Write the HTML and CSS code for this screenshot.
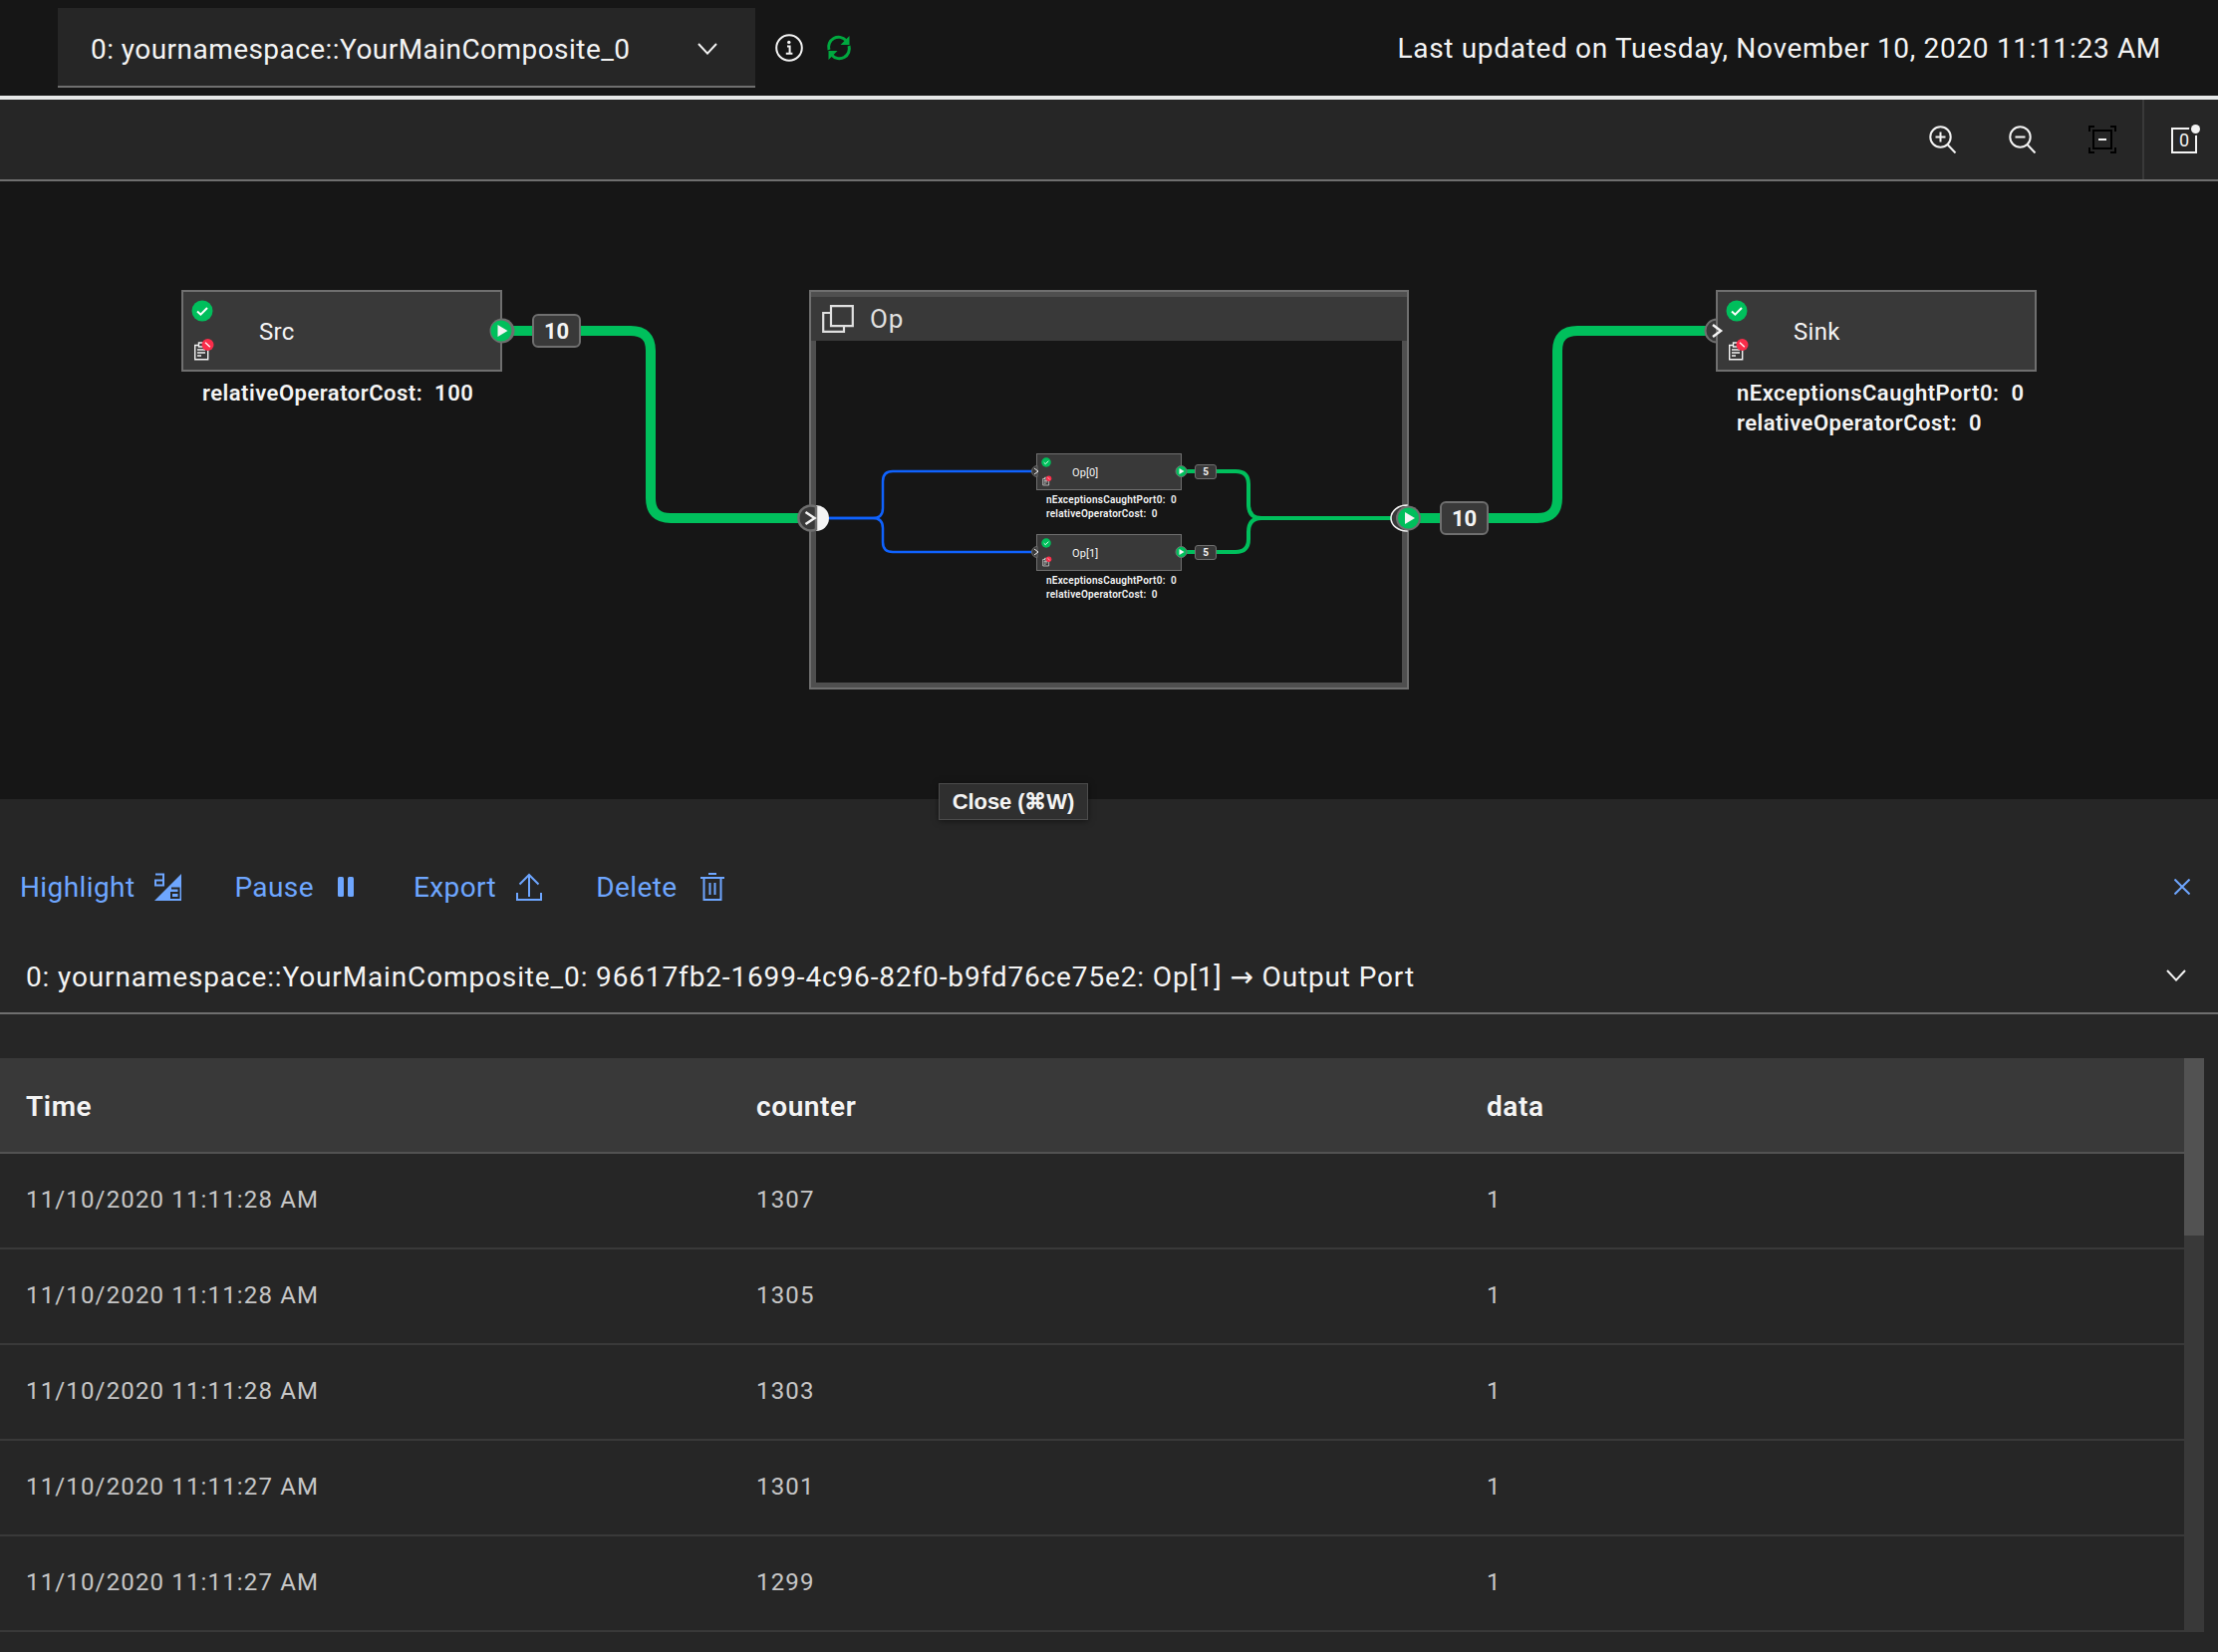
FILE: index.html
```html
<!DOCTYPE html>
<html>
<head>
  <title>Streams Graph</title>
  <link rel="stylesheet" href="styles.css">
</head>
<body>
  <svg class="icon-defs" width="0" height="0">
    <defs>
      <symbol id="i-check" viewBox="0 0 22 22">
        <circle cx="11" cy="11" r="10.5" fill="#00bf5c"/>
        <path d="M6 11.5l3.4 3.2L16 8" fill="none" stroke="#fff" stroke-width="2"/>
      </symbol>
      <symbol id="i-log" viewBox="0 0 24 24">
        <path d="M3.7 7.5h13v14.3h-13z" fill="#393939" stroke="#f4f4f4" stroke-width="1.4"/>
        <path d="M7.5 5h5.5v4H7.5z" fill="#393939" stroke="#f4f4f4" stroke-width="1.4"/>
        <path d="M6 12h8M6 15h8M6 18h4" stroke="#f4f4f4" stroke-width="1.3"/>
        <circle cx="16.500" cy="7" r="6" fill="#fa2d4a"/>
        <path d="M14 4.800l4.800 4.400" stroke="#fff" stroke-width="1.3"/>
      </symbol>
      <symbol id="i-chevron" viewBox="0 0 20 12">
        <path d="M1 1l9 9.6L19 1" fill="none" stroke="currentColor" stroke-width="2"/>
      </symbol>
    </defs>
  </svg>

  <header class="topbar">
    <div class="job-select">
      <span>0: yournamespace::YourMainComposite_0</span>
      <svg class="chevron"><use href="#i-chevron"/></svg>
    </div>
    <svg class="info-icon" viewBox="0 0 28 28">
      <circle cx="14" cy="14" r="12.8" fill="none" stroke="#f4f4f4" stroke-width="2"/>
      <path d="M12 12.5h2.6v7M10.8 19.8h6.6" fill="none" stroke="#f4f4f4" stroke-width="2"/>
      <circle cx="13.8" cy="8.4" r="1.7" fill="#f4f4f4"/>
    </svg>
    <svg class="refresh-icon" viewBox="0 0 26 26">
      <path d="M3 15A10 10 0 0 1 20 5.5" fill="none" stroke="#00a83f" stroke-width="3"/>
      <path d="M23 11A10 10 0 0 1 6 20.5" fill="none" stroke="#00a83f" stroke-width="3"/>
      <path d="M23.500 1v9h-9zM2.500 25v-9h9z" fill="#00a83f"/>
    </svg>
    <div class="updated">Last updated on Tuesday, November 10, 2020 11:11:23 AM</div>
  </header>

  <div class="toolbar">
    <svg class="tool-icon" viewBox="0 0 28 28">
      <circle cx="11.500" cy="11.500" r="10.200" fill="none" stroke="#f4f4f4" stroke-width="2"/>
      <path d="M11.500 6.500v10M6.500 11.500h10M18.500 19l8 8.500" fill="none" stroke="#f4f4f4" stroke-width="2"/>
    </svg>
    <svg class="tool-icon" viewBox="0 0 28 28">
      <circle cx="11.500" cy="11.500" r="10.200" fill="none" stroke="#f4f4f4" stroke-width="2"/>
      <path d="M6.500 11.500h10M18.500 19l8 8.500" fill="none" stroke="#f4f4f4" stroke-width="2"/>
    </svg>
    <svg class="tool-icon" viewBox="0 0 28 28">
      <path d="M1 6V1h5M22 1h5v5M1 22v5h5M27 22v5h-5" fill="none" stroke="#000" stroke-width="2"/>
      <path d="M5 5h18v18H5z" fill="none" stroke="#000" stroke-width="2"/>
      <path d="M10 14h8" stroke="#f4f4f4" stroke-width="2"/>
    </svg>
    <div class="tool-divider">
      <div class="notif">
        <span>0</span>
      </div>
    </div>
  </div>

  <main class="canvas">
    <div class="composite">
      <div class="composite-title">
        <svg class="composite-icon" viewBox="0 0 32 28">
          <path d="M9 1.200h21.800v20H9z" fill="none" stroke="#e0e0e0" stroke-width="2.200"/>
          <path d="M9 8H1.200v18.800H22V21" fill="none" stroke="#e0e0e0" stroke-width="2.200"/>
        </svg>
        <span>Op</span>
      </div>
    </div>

    <div class="op-node op-src">
      <div class="op-box">
        <div class="op-icons">
          <svg class="st-icon"><use href="#i-check"/></svg>
          <svg class="log-icon"><use href="#i-log"/></svg>
        </div>
        <span class="op-name">Src</span>
      </div>
      <div class="op-metrics">
        <div>relativeOperatorCost:  100</div>
      </div>
    </div>

    <div class="op-node op-sink">
      <div class="op-box">
        <div class="op-icons">
          <svg class="st-icon"><use href="#i-check"/></svg>
          <svg class="log-icon"><use href="#i-log"/></svg>
        </div>
        <span class="op-name">Sink</span>
      </div>
      <div class="op-metrics">
        <div>nExceptionsCaughtPort0:  0</div>
        <div>relativeOperatorCost:  0</div>
      </div>
    </div>

    <div class="op-node small op-par0">
      <div class="op-box">
        <div class="op-icons">
          <svg class="st-icon"><use href="#i-check"/></svg>
          <svg class="log-icon"><use href="#i-log"/></svg>
        </div>
        <span class="op-name">Op[0]</span>
      </div>
      <div class="op-metrics">
        <div>nExceptionsCaughtPort0:  0</div>
        <div>relativeOperatorCost:  0</div>
      </div>
    </div>

    <div class="op-node small op-par1">
      <div class="op-box">
        <div class="op-icons">
          <svg class="st-icon"><use href="#i-check"/></svg>
          <svg class="log-icon"><use href="#i-log"/></svg>
        </div>
        <span class="op-name">Op[1]</span>
      </div>
      <div class="op-metrics">
        <div>nExceptionsCaughtPort0:  0</div>
        <div>relativeOperatorCost:  0</div>
      </div>
    </div>

    <!-- wires and ports, viewBox uses page coordinates -->
    <svg class="wires" viewBox="0 182 2226 620">
      <path class="wire-blue" d="M832 520H876Q886 520 886 510V483Q886 473 896 473H1035"/>
      <path class="wire-blue" d="M832 520H876Q886 520 886 530V544Q886 554 896 554H1035"/>
      <path class="wire-thin" d="M1186 473H1240Q1253 473 1253 486V506Q1253 520 1266 520H1400"/>
      <path class="wire-thin" d="M1186 554H1240Q1253 554 1253 541V534Q1253 520 1266 520"/>
      <path class="wire" d="M503 332H633Q653 332 653 352V500Q653 520 673 520H805"/>
      <path class="wire" d="M1412 520H1543Q1563 520 1563 500V352Q1563 332 1583 332H1715"/>

      <!-- composite input -->
      <path d="M819 507A13 13 0 0 1 819 533z" fill="#f4f4f4"/>
      <path d="M819 508.600A12.500 12.500 0 1 0 819 531.400z" fill="#393939" stroke="#6f6f6f" stroke-width="2.500"/>
      <path class="chev" d="M808.500 514l9 6-9 6"/>

      <!-- composite output -->
      <path d="M1412 507A16 13 0 0 0 1412 533z" fill="#393939" stroke="#f4f4f4" stroke-width="1.500"/>
      <circle cx="1413.500" cy="520" r="12.500" fill="#6f6f6f"/>
      <circle cx="1413.500" cy="520" r="10.500" fill="#00bf5c"/>
      <path d="M1410 514l10 6-10 6z" fill="#f4f4f4"/>

      <!-- src out -->
      <circle cx="504" cy="332" r="12.500" fill="#6f6f6f"/>
      <circle cx="503" cy="332" r="10.500" fill="#00bf5c"/>
      <path d="M499.500 326l10 6-10 6z" fill="#f4f4f4"/>

      <!-- sink in -->
      <path d="M1723 320.500A11.500 11.500 0 1 0 1723 343.500z" fill="#393939" stroke="#6f6f6f" stroke-width="2"/>
      <path class="chev" d="M1719 326l8 6-8 6"/>

      <!-- parallel channels -->
      <path d="M1041 467.500A5.500 5.500 0 1 0 1041 478.500z" fill="#393939" stroke="#6f6f6f"/>
      <path class="chev-s" d="M1038 470l4 3-4 3"/>
      <path d="M1041 548.500A5.500 5.500 0 1 0 1041 559.500z" fill="#393939" stroke="#6f6f6f"/>
      <path class="chev-s" d="M1038 551l4 3-4 3"/>
      <circle cx="1185.500" cy="473" r="5.500" fill="#00bf5c" stroke="#6f6f6f"/>
      <path d="M1183.500 470l5 3-5 3z" fill="#f4f4f4"/>
      <circle cx="1185.500" cy="554" r="5.500" fill="#00bf5c" stroke="#6f6f6f"/>
      <path d="M1183.500 551l5 3-5 3z" fill="#f4f4f4"/>
    </svg>

    <span class="flow-badge fb-src">10</span>
    <span class="flow-badge fb-out">10</span>
    <span class="flow-badge small fb-par0">5</span>
    <span class="flow-badge small fb-par1">5</span>

    <div class="tooltip">Close (⌘W)</div>
  </main>

  <section class="panel">
    <div class="actions">
      <a class="action">Highlight
        <svg class="act-icon" viewBox="0 0 28 28">
          <path d="M28 1v27H1z" fill="#6ea6ff"/>
          <path d="M18 15.500h7.500v9.500H18v-5h7.500" fill="none" stroke="#262626" stroke-width="2"/>
          <path d="M2 1.500h8v11H2v-5h8" fill="none" stroke="#6ea6ff" stroke-width="2"/>
        </svg>
      </a>
      <a class="action">Pause
        <svg class="act-icon pause" viewBox="0 0 16 20">
          <rect x="0" y="0" width="6" height="20" rx="1.500" fill="#6ea6ff"/>
          <rect x="10" y="0" width="6" height="20" rx="1.500" fill="#6ea6ff"/>
        </svg>
      </a>
      <a class="action">Export
        <svg class="act-icon" viewBox="0 0 26 28">
          <path d="M1 20v7h24v-7M13 24V2M3.500 11.500L13 2l9.500 9.500" fill="none" stroke="#6ea6ff" stroke-width="2"/>
        </svg>
      </a>
      <a class="action">Delete
        <svg class="act-icon" viewBox="0 0 24 28">
          <path d="M0 5h24M8 1h8M3.500 5v22h17V5M9.500 10v12M14.500 10v12" fill="none" stroke="#6ea6ff" stroke-width="2"/>
        </svg>
      </a>
      <svg class="close-x" viewBox="0 0 16 16">
        <path d="M.5 .5l15 15M15.500 .5l-15 15" stroke="#6ea6ff" stroke-width="2"/>
      </svg>
    </div>

    <div class="port-select">
      <span>0: yournamespace::YourMainComposite_0: 96617fb2-1699-4c96-82f0-b9fd76ce75e2: Op[1] → Output Port</span>
      <svg class="chevron"><use href="#i-chevron"/></svg>
    </div>

    <div class="table-wrap">
      <table class="tuples">
        <thead>
          <tr><th>Time</th><th>counter</th><th>data</th></tr>
        </thead>
        <tbody>
          <tr><td>11/10/2020 11:11:28 AM</td><td>1307</td><td>1</td></tr>
          <tr><td>11/10/2020 11:11:28 AM</td><td>1305</td><td>1</td></tr>
          <tr><td>11/10/2020 11:11:28 AM</td><td>1303</td><td>1</td></tr>
          <tr><td>11/10/2020 11:11:27 AM</td><td>1301</td><td>1</td></tr>
          <tr><td>11/10/2020 11:11:27 AM</td><td>1299</td><td>1</td></tr>
        </tbody>
      </table>
      <div class="scroll-track"><div class="scroll-thumb"></div></div>
    </div>
  </section>
</body>
</html>
```

FILE: styles.css
```css
* {
  box-sizing: border-box;
}

html, body {
  height: 1658px;
  overflow: hidden;
}

body {
  margin: 0;
  display: flex;
  flex-direction: column;
  background-color: #161616;
  color: #f4f4f4;
  font-family: Roboto, "DejaVu Sans", sans-serif;
}

.icon-defs {
  position: absolute;
}

/* top bar */
.topbar {
  height: 100px;
  flex: none;
  display: flex;
  align-items: flex-start;
  padding: 8px 57px 0 58px;
  border-bottom: 4px solid #e6e8e8;
}

.job-select {
  width: 700px;
  height: 80px;
  display: flex;
  align-items: center;
  justify-content: space-between;
  padding: 5px 38px 0 33px;
  background-color: #262626;
  border-bottom: 2px solid #6f6f6f;
  font-size: 28px;
  letter-spacing: 0.45px;
}

.chevron {
  width: 20px;
  height: 12px;
  color: #f4f4f4;
  margin-bottom: 2px;
}

.info-icon {
  width: 28px;
  height: 28px;
  margin: 26px 0 0 20px;
}

.refresh-icon {
  width: 26px;
  height: 26px;
  margin: 27px 0 0 23px;
}

.updated {
  margin-left: auto;
  margin-top: 24px;
  font-size: 28px;
  line-height: 34px;
  letter-spacing: 0.68px;
}

/* toolbar */
.toolbar {
  height: 82px;
  flex: none;
  display: flex;
  align-items: center;
  justify-content: flex-end;
  background-color: #262626;
  border-bottom: 2px solid #6f6f6f;
}

.tool-icon {
  width: 28px;
  height: 28px;
  margin-left: 52px;
}

.tool-divider {
  width: 76px;
  height: 80px;
  margin-left: 26px;
  border-left: 2px solid #393939;
  display: flex;
  align-items: center;
  padding-left: 27px;
}

.notif {
  position: relative;
  width: 26px;
  height: 26px;
  border: 2px solid #f4f4f4;
  font-size: 18px;
  line-height: 22px;
  text-align: center;
  margin-top: 2px;
}

.notif::after {
  content: "";
  position: absolute;
  top: -5px;
  right: -5px;
  width: 9px;
  height: 9px;
  border-radius: 50%;
  background-color: #f4f4f4;
  box-shadow: 0 0 0 2px #262626;
}

/* graph canvas */
.canvas {
  position: relative;
  height: 620px;
  flex: none;
}

.composite {
  position: absolute;
  left: 812px;
  top: 109px;
  width: 602px;
  height: 401px;
  background-color: #161616;
  border: 7px solid #4f4f4f;
  outline: 2px solid #6f6f6f;
  outline-offset: -2px;
}

.composite-title {
  height: 44px;
  margin: 0 -5px;
  padding: 0 5px 0 11px;
  display: flex;
  align-items: center;
  background-color: #393939;
  font-size: 26px;
  letter-spacing: 0.8px;
  color: #e0e0e0;
}

.composite-icon {
  width: 32px;
  height: 28px;
  margin-right: 16px;
}

.op-node {
  position: absolute;
  width: 322px;
}

.op-box {
  height: 82px;
  display: flex;
  align-items: center;
  padding: 8px 0 8px 8px;
  background-color: #393939;
  border: 2px solid #6f6f6f;
}

.op-icons {
  width: 24px;
  height: 100%;
  display: flex;
  flex-direction: column;
  justify-content: space-between;
}

.st-icon {
  width: 22px;
  height: 22px;
}

.log-icon {
  width: 24px;
  height: 24px;
}

.op-name {
  margin-left: 44px;
  padding-top: 2px;
  font-size: 24px;
  letter-spacing: 0.3px;
}

.op-metrics {
  padding: 7px 0 0 21px;
  font-size: 22px;
  font-weight: 600;
  line-height: 30px;
  letter-spacing: 0.5px;
}

.op-metrics div {
  white-space: pre;
}

.op-src { left: 182px; top: 109px; }
.op-sink { left: 1722px; top: 109px; }
.op-par0 { left: 1040px; top: 273px; }
.op-par1 { left: 1040px; top: 354px; }

.op-node.small {
  width: 146px;
}

.small .op-box {
  height: 37px;
  padding: 3px 0 3px 4px;
  border-width: 1px;
}

.small .op-icons {
  width: 11px;
}

.small .st-icon {
  width: 10px;
  height: 10px;
}

.small .log-icon {
  width: 11px;
  height: 11px;
}

.small .op-name {
  margin-left: 20px;
  padding-top: 2px;
  font-size: 11px;
  letter-spacing: 0.1px;
}

.small .op-metrics {
  padding: 3px 0 0 10px;
  font-size: 10px;
  line-height: 13.5px;
  letter-spacing: 0.22px;
}

.wires {
  position: absolute;
  left: 0;
  top: 0;
  width: 2226px;
  height: 620px;
  fill: none;
}

.wire {
  fill: none;
  stroke: #00bf5c;
  stroke-width: 10;
}

.wire-thin {
  fill: none;
  stroke: #00bf5c;
  stroke-width: 4;
}

.wire-blue {
  fill: none;
  stroke: #0f62fe;
  stroke-width: 2.5;
}

.chev {
  fill: none;
  stroke: #f4f4f4;
  stroke-width: 2.5;
}

.chev-s {
  fill: none;
  stroke: #f4f4f4;
  stroke-width: 1;
}

.flow-badge {
  position: absolute;
  display: flex;
  align-items: center;
  justify-content: center;
  width: 49px;
  height: 34px;
  background-color: #393939;
  border: 2px solid #6f6f6f;
  border-radius: 6px;
  font-size: 22px;
  font-weight: 700;
}

.flow-badge.small {
  width: 22px;
  height: 15px;
  border-width: 1px;
  border-radius: 3px;
  font-size: 10px;
}

.fb-src { left: 534px; top: 133px; }
.fb-out { left: 1445px; top: 321px; }
.fb-par0 { left: 1199px; top: 284px; }
.fb-par1 { left: 1199px; top: 365px; }

.tooltip {
  position: absolute;
  left: 942px;
  top: 604px;
  width: 150px;
  height: 37px;
  display: flex;
  align-items: center;
  justify-content: center;
  background-color: #2f2f2f;
  border: 1px solid #4c4c4c;
  box-shadow: 0 1px 6px rgba(0, 0, 0, 0.5);
  font-family: "Liberation Sans", sans-serif;
  font-size: 22px;
  font-weight: 700;
  letter-spacing: -0.1px;
  color: #f4f4f4;
  z-index: 2;
}

/* bottom panel */
.panel {
  flex: 1;
  min-height: 0;
  overflow: hidden;
  background-color: #262626;
}

.actions {
  height: 134px;
  display: flex;
  align-items: center;
  padding: 42px 28px 0 20px;
}

.action {
  display: flex;
  align-items: center;
  margin-right: 53px;
  font-size: 28px;
  letter-spacing: 0.4px;
  color: #6ea6ff;
}

.action:last-of-type .act-icon {
  margin-left: 22px;
}

.act-icon {
  width: 28px;
  height: 28px;
  margin-left: 19px;
}

.act-icon.pause {
  width: 16px;
  height: 20px;
  margin: 0 7px 0 24px;
}

.close-x {
  width: 16px;
  height: 16px;
  margin-left: auto;
}

.port-select {
  height: 82px;
  display: flex;
  align-items: center;
  justify-content: space-between;
  padding: 10px 32px 2px 26px;
  border-bottom: 2px solid #6f6f6f;
  font-size: 28px;
  letter-spacing: 0.86px;
}

.table-wrap {
  display: flex;
  margin: 44px 14px 0 0;
}

.tuples {
  flex: 1;
  border-collapse: collapse;
  table-layout: fixed;
}

.tuples th {
  height: 95px;
  padding: 2px 0 0 26px;
  width: 733px;
  background-color: #393939;
  border-bottom: 2px solid #525252;
  font-size: 28px;
  font-weight: 600;
  letter-spacing: 0.6px;
  text-align: left;
}

.tuples th:last-child,
.tuples td:last-child {
  width: auto;
}

.tuples td {
  height: 96px;
  padding: 0 0 3px 26px;
  border-bottom: 2px solid #393939;
  font-size: 24px;
  letter-spacing: 1.15px;
  color: #c6c6c6;
}

.scroll-track {
  width: 20px;
  flex: none;
  background-color: #393939;
}

.scroll-thumb {
  height: 178px;
  background-color: #525252;
}
```
